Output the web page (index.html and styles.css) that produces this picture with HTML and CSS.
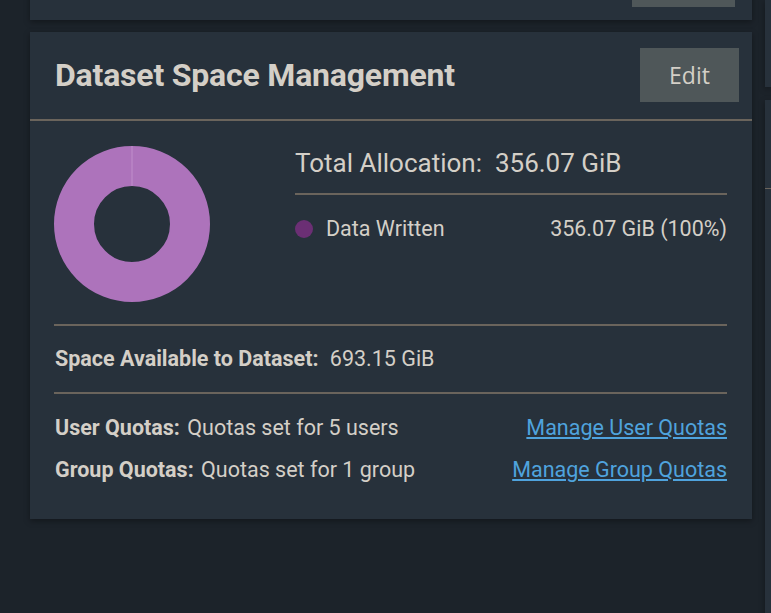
FILE: index.html
```html
<!DOCTYPE html>
<html lang="en">
<head>
  <meta charset="UTF-8"/>
  <title>Dataset Space Management</title>
  <link rel="stylesheet" href="styles.css">
</head>
<body>

  <div class="page">
    <!-- Left column -->
    <div class="main-col">

      <!-- previous card, scrolled mostly out of view -->
      <div class="card card-prev">
        <button class="btn"></button>
      </div>

      <!-- Dataset Space Management -->
      <div class="card">
        <div class="card-header">
          <h2>Dataset Space Management</h2>
          <button class="btn">Edit</button>
        </div>

        <div class="card-body">
          <div class="chart-row">
            <svg class="donut" width="156" height="156" viewBox="0 0 156 156">
              <circle cx="78" cy="78" r="58" fill="none" stroke="#ad73bb" stroke-width="40"/>
              <line x1="78" y1="0" x2="78" y2="40" stroke="#c08fcb" stroke-width="1"/>
            </svg>

            <div class="allocation">
              <div class="total">Total Allocation:&nbsp; 356.07 GiB</div>
              <div class="legend-item">
                <span class="dot"></span>
                <span class="legend-label">Data Written</span>
                <span class="legend-value">356.07 GiB (100%)</span>
              </div>
            </div>
          </div>

          <div class="available">
            <b>Space Available to Dataset:</b> 693.15 GiB
          </div>

          <div class="quotas">
            <div class="quota-row">
              <span><b>User Quotas:</b> Quotas set for 5 users</span>
              <a href="#">Manage User Quotas</a>
            </div>
            <div class="quota-row">
              <span><b>Group Quotas:</b> Quotas set for 1 group</span>
              <a href="#">Manage Group Quotas</a>
            </div>
          </div>
        </div>
      </div>
    </div>

    <!-- Right column (cut off) -->
    <div class="side-col">
      <div class="card side-top"></div>
      <div class="card side-next">
        <div class="side-line"></div>
      </div>
    </div>
  </div>

</body>
</html>
```

FILE: styles.css
```css
body {
  margin: 0;
  background-color: #1c232a;
  color: #d4cfc7;
  font-family: Roboto, "Liberation Sans", sans-serif;
  overflow: hidden;
  height: 613px;
}

.page {
  display: flex;
  gap: 13px;
  padding-left: 30px;
}

.main-col {
  width: 722px;
  flex-shrink: 0;
  display: flex;
  flex-direction: column;
  gap: 12px;
  margin-top: -60px;
}

.card {
  background-color: #27313b;
  box-shadow: 0 2px 6px rgba(0, 0, 0, 0.35);
}

.btn {
  background-color: #4f5759;
  color: #d4cfc7;
  border: none;
  font-family: "Open Sans", sans-serif;
  font-size: 23px;
  width: 99px;
  height: 54px;
  cursor: pointer;
}

.card-prev {
  display: flex;
  justify-content: flex-end;
  padding: 13px 17px 13px;
}

.card-prev .btn {
  width: 103px;
}

.card-header {
  display: flex;
  justify-content: space-between;
  align-items: center;
  padding: 16px 13px 17px 25px;
  border-bottom: 2px solid #6a645c;
}

.card-header h2 {
  margin: 0;
  font-size: 32px;
  font-weight: bold;
  letter-spacing: -0.2px;
}

.card-body {
  padding: 0 25px 0 24px;
}

.chart-row {
  display: flex;
  padding: 25px 0 22px;
  border-bottom: 2px solid #6a645c;
}

.donut {
  display: block;
  flex-shrink: 0;
}

.allocation {
  flex: 1;
  margin-left: 85px;
  padding-top: 2px;
}

.total {
  font-size: 26px;
  line-height: 30px;
  padding-bottom: 15px;
  border-bottom: 2px solid #6a645c;
}

.legend-item {
  display: flex;
  align-items: center;
  margin-top: 21px;
  font-size: 21.5px;
}

.dot {
  width: 18px;
  height: 18px;
  border-radius: 50%;
  background-color: #6b2f74;
  margin-right: 13px;
}

.legend-value {
  margin-left: auto;
}

.available {
  font-size: 21.5px;
  line-height: 24px;
  padding: 21px 0 21px 1px;
  border-bottom: 2px solid #6a645c;
}

.available b {
  margin-right: 6px;
}

.quotas {
  padding: 22px 0 37px 1px;
  display: flex;
  flex-direction: column;
  gap: 18px;
}

.quota-row {
  display: flex;
  justify-content: space-between;
  font-size: 21.5px;
  line-height: 24px;
}

.quota-row b {
  margin-right: 2px;
}

.quota-row a {
  color: #4fa3dd;
}

.side-col {
  flex: 1;
  display: flex;
  flex-direction: column;
  gap: 13px;
}

.side-top {
  height: 87px;
}

.side-next {
  height: 600px;
  padding-top: 88px;
}

.side-line {
  height: 1px;
  background-color: #6a645c;
}
```
